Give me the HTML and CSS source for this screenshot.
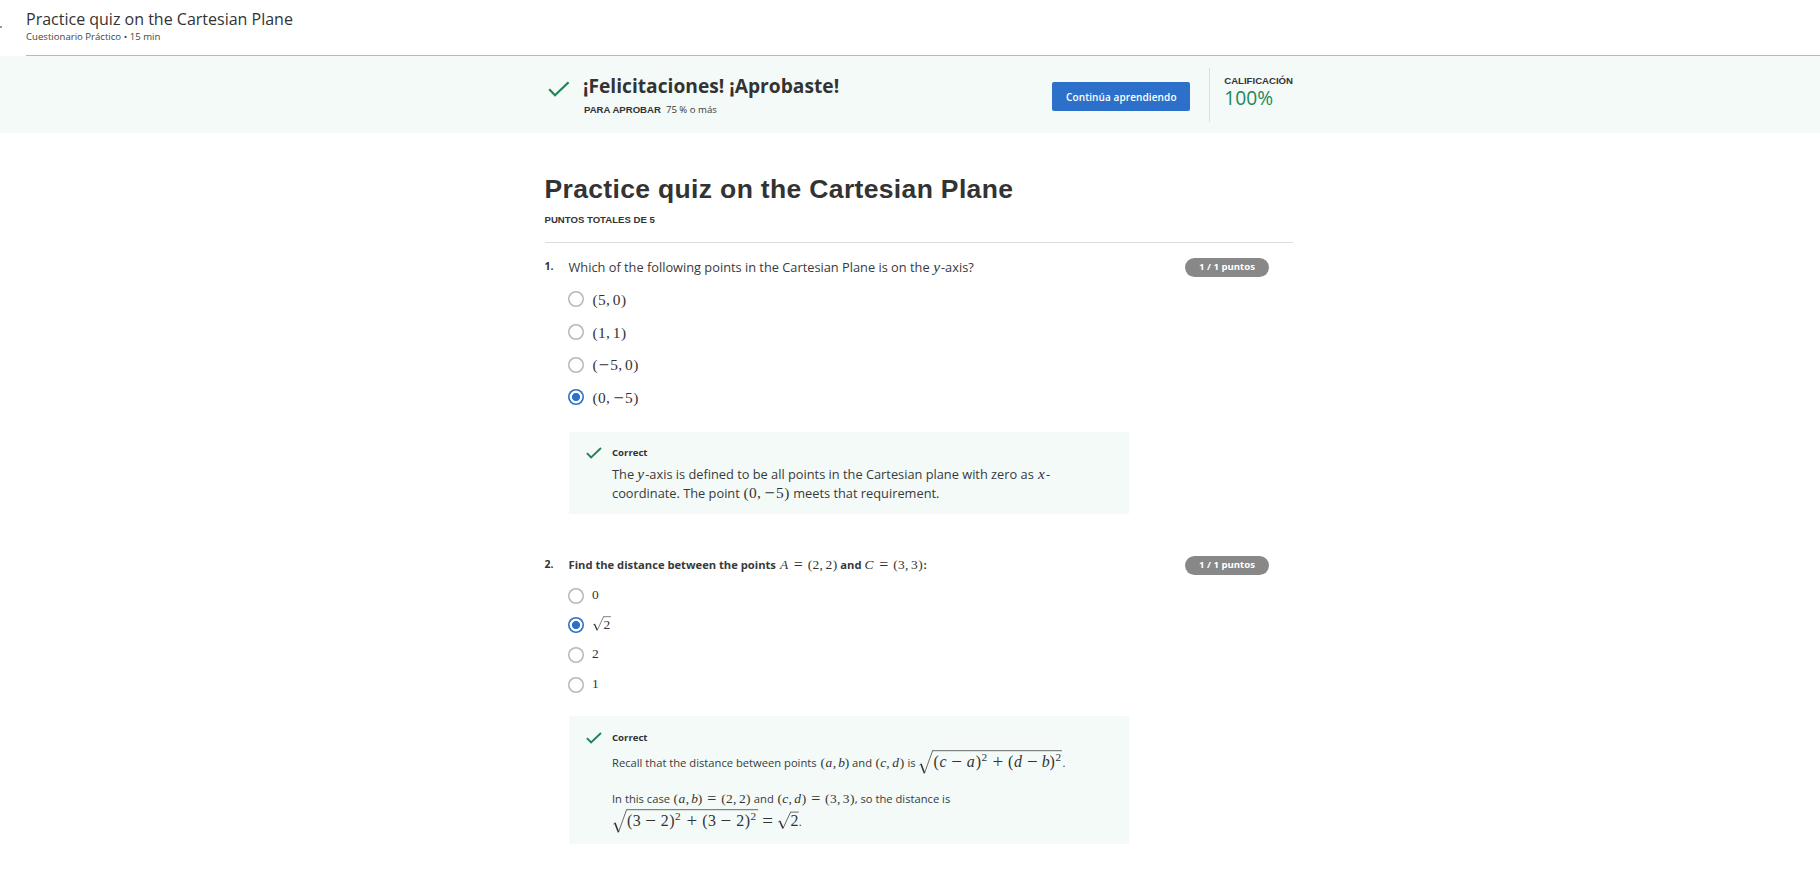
FILE: index.html
```html
<!DOCTYPE html>
<html lang="es">
<head>
<meta charset="utf-8">
<title>Practice quiz on the Cartesian Plane</title>
<link rel="stylesheet" href="styles.css">
</head>
<body>
<header class="top">
  <span class="back"></span>
  <div class="top-text">
    <div class="top-title"><span>Practice quiz on the Cartesian Plane</span></div>
    <div class="top-sub"><span>Cuestionario Práctico • 15 min</span></div>
  </div>
</header>
<section class="band">
  <div class="wrap band-row">
    <svg class="check-lg" viewBox="0 0 22 16"><path d="M1.2 8.2 7 14.2 20.6 1.2"/></svg>
    <div class="congrats">
      <div class="congrats-title"><span>¡Felicitaciones! ¡Aprobaste!</span></div>
      <div class="congrats-sub"><b>PARA APROBAR</b><span>75 % o más</span></div>
    </div>
    <button class="btn"><span>Continúa aprendiendo</span></button>
    <div class="grade">
      <div class="grade-label"><span>CALIFICACIÓN</span></div>
      <div class="grade-value"><span>100%</span></div>
    </div>
  </div>
</section>
<main class="wrap">
  <h1><span>Practice quiz on the Cartesian Plane</span></h1>
  <div class="total"><span>PUNTOS TOTALES DE 5</span></div>

  <section class="question q1">
    <div class="num">1.</div>
    <div class="body">
      <p class="ask"><span>Which of the following points in the Cartesian Plane is on the </span><svg class="tex" style="width:.52em" viewBox="0 -700 520 700"><text class="it" x="20">y</text></svg><span>-axis?</span></p>
      <ul class="options">
        <li><i class="radio"></i><svg class="tex" style="width:2.223em" viewBox="0 -700 2223 700"><text x="28 389 903 1334 1862">(5,0)</text></svg></li>
        <li><i class="radio"></i><svg class="tex" style="width:2.223em" viewBox="0 -700 2223 700"><text x="28 389 903 1334 1862">(1,1)</text></svg></li>
        <li><i class="radio"></i><svg class="tex" style="width:3.001em" viewBox="0 -700 3001 700"><text><tspan x="28">(</tspan><tspan class="op" x="435">−</tspan><tspan x="1167 1681 2112 2640">5,0)</tspan></text></svg></li>
        <li><i class="radio on"></i><svg class="tex" style="width:3.001em" viewBox="0 -700 3001 700"><text><tspan x="28 389 903">(0,</tspan><tspan class="op" x="1380">−</tspan><tspan x="2112 2640">5)</tspan></text></svg></li>
      </ul>
      <div class="feedback">
        <svg class="check-sm" viewBox="0 0 22 16"><path d="M1.2 8.2 7 14.2 20.6 1.2"/></svg>
        <div class="fb-text">
          <div class="correct"><span>Correct</span></div>
          <p><span>The </span><svg class="tex" style="width:.5em" viewBox="0 -700 500 700"><text class="it" x="20">y</text></svg><span>-axis is defined to be all points in the Cartesian plane with zero as </span><svg class="tex" style="width:.572em" viewBox="0 -700 572 700"><text class="it" x="70">x</text></svg><span>-</span></p>
          <p><span>coordinate. The point </span><svg class="tex" style="width:3.001em" viewBox="0 -700 3001 700"><text><tspan x="28 389 903">(0,</tspan><tspan class="op" x="1380">−</tspan><tspan x="2112 2640">5)</tspan></text></svg><span> meets that requirement.</span></p>
        </div>
      </div>
    </div>
    <div class="pill"><span>1 / 1 puntos</span></div>
  </section>

  <section class="question q2">
    <div class="num">2.</div>
    <div class="body">
      <p class="ask"><b>Find the distance between the points </b><svg class="tex" style="width:4.307em" viewBox="0 -700 4307 700"><text><tspan class="it" x="70">A</tspan><tspan class="op" x="1084">=</tspan><tspan x="2112 2473 2987 3418 3946">(2,2)</tspan></text></svg><b> and </b><svg class="tex" style="width:4.344em" viewBox="0 -700 4344 700"><text><tspan class="it" x="40">C</tspan><tspan class="op" x="1121">=</tspan><tspan x="2149 2510 3024 3455 3983">(3,3)</tspan></text></svg><b>:</b></p>
      <ul class="options">
        <li><i class="radio"></i><svg class="tex" style="width:.5em" viewBox="0 -700 500 700"><text>0</text></svg></li>
        <li><i class="radio on"></i><svg class="tex" style="width:1.333em" viewBox="0 -700 1333 700"><path class="rule" d="M833 -870H1390"/><path class="surd" d="M90 -270 180 -330"/><path class="surd heavy" d="M180 -330 385 130"/><path class="surd" d="M385 130 850 -870"/><text x="850">2</text></svg></li>
        <li><i class="radio"></i><svg class="tex" style="width:.5em" viewBox="0 -700 500 700"><text>2</text></svg></li>
        <li><i class="radio"></i><svg class="tex" style="width:.5em" viewBox="0 -700 500 700"><text>1</text></svg></li>
      </ul>
      <div class="feedback">
        <svg class="check-sm" viewBox="0 0 22 16"><path d="M1.2 8.2 7 14.2 20.6 1.2"/></svg>
        <div class="fb-text">
          <div class="correct"><span>Correct</span></div>
          <p class="l1"><span>Recall that the distance between points </span><svg class="tex" style="width:2.181em" viewBox="0 -700 2181 700"><text><tspan x="28">(</tspan><tspan class="it" x="400">a</tspan><tspan x="932">,</tspan><tspan class="it" x="1345">b</tspan><tspan x="1820">)</tspan></text></svg><span> and </span><svg class="tex" style="width:2.176em" viewBox="0 -700 2176 700"><text><tspan x="28">(</tspan><tspan class="it" x="389">c</tspan><tspan x="836">,</tspan><tspan class="it" x="1270">d</tspan><tspan x="1815">)</tspan></text></svg><span> is </span><svg class="tex big" style="width:8.941em" viewBox="0 -700 8941 700"><path class="rule" d="M890 -1030H8941"/><path class="surd" d="M90 -130 180 -210"/><path class="surd heavy" d="M180 -210 400 370"/><path class="surd" d="M400 370 905 -1030"/><text><tspan x="958">(</tspan><tspan class="it" x="1339">c</tspan><tspan class="op" x="2060">−</tspan><tspan class="it" x="3025">a</tspan><tspan x="3581">)</tspan><tspan class="sup" x="3942" dy="-363">2</tspan><tspan class="op" x="4634" dy="363">+</tspan><tspan x="5596">(</tspan><tspan class="it" x="5957">d</tspan><tspan class="op" x="6765">−</tspan><tspan class="it" x="7690">b</tspan><tspan x="8176">)</tspan><tspan class="sup" x="8537" dy="-363">2</tspan></text></svg><span>.</span></p>
          <p class="l2"><span>In this case </span><svg class="tex" style="width:5.738em" viewBox="0 -700 5738 700"><text><tspan x="28">(</tspan><tspan class="it" x="400">a</tspan><tspan x="932">,</tspan><tspan class="it" x="1345">b</tspan><tspan x="1820">)</tspan><tspan class="op" x="2515">=</tspan><tspan x="3543 3904 4418 4849 5377">(2,2)</tspan></text></svg><span> and </span><svg class="tex" style="width:5.733em" viewBox="0 -700 5733 700"><text><tspan x="28">(</tspan><tspan class="it" x="389">c</tspan><tspan x="836">,</tspan><tspan class="it" x="1270">d</tspan><tspan x="1815">)</tspan><tspan class="op" x="2510">=</tspan><tspan x="3538 3899 4413 4844 5372">(3,3)</tspan></text></svg><span>, so the distance is</span></p>
          <p class="l3"><svg class="tex big" style="width:11.6em" viewBox="0 -700 11600 700"><path class="rule" d="M890 -1030H9080M11080 -880H11600"/><path class="surd" d="M90 -130 180 -210"/><path class="surd heavy" d="M180 -210 400 370"/><path class="surd" d="M400 370 905 -1030"/><text><tspan x="928 1289">(3</tspan><tspan class="op" x="2060">−</tspan><tspan x="3031 3559">2)</tspan><tspan class="sup" x="3920" dy="-363">2</tspan><tspan class="op" x="4622" dy="363">+</tspan><tspan x="5604 5965">(3</tspan><tspan class="op" x="6743">−</tspan><tspan x="7717 8245">2)</tspan><tspan class="sup" x="8606" dy="-363">2</tspan><tspan class="op" x="9334" dy="363">=</tspan><tspan x="11090">2</tspan></text><path class="surd" d="M10330 -270 10420 -330"/><path class="surd heavy" d="M10420 -330 10625 130"/><path class="surd" d="M10625 130 11095 -880"/></svg><span>.</span></p>
        </div>
      </div>
    </div>
    <div class="pill"><span>1 / 1 puntos</span></div>
  </section>
</main>
</body>
</html>
```
FILE: styles.css
```css
* { box-sizing: border-box; }
body {
  margin: 0;
  height: 871px;
  overflow: hidden;
  background: #fff;
  color: #373a3c;
  font-family: "Open Sans", "Noto Sans", sans-serif;
}
p, ul, h1 { margin: 0; padding: 0; }
ul { list-style: none; }
span, b { white-space: pre; }

.top { display: flex; height: 56px; }
.back { width: 2px; height: 2px; margin: 26px 24px 0 0; background: #999; }
.top-text { flex: 1; padding-top: 9px; border-bottom: 1px solid #b5b9b8; }
.top-title { font-size: 16px; line-height: 20px; color: #333; }
.top-sub { font-size: 9.6px; line-height: 16px; color: #444; }

.wrap { width: 748.5px; margin-left: 544.5px; }
.band { height: 77px; background: #f3faf8; }
.band-row { display: flex; }
.check-lg { width: 22px; height: 16px; margin: 25px 13px 0 3.5px; }
.check-lg path, .check-sm path { fill: none; stroke: #1f8354; stroke-width: 2.2; }
.congrats { width: 470px; padding-top: 16px; }
.congrats-title { font-weight: 700; font-size: 19.2px; line-height: 28px; color: #333; }
.congrats-sub { display: flex; gap: 5px; padding: 2px 0 0 1px; line-height: 16px; font-size: 9.6px; }
.congrats-sub b { font: 700 9.6px/16px "Liberation Sans", Arial, sans-serif; color: #333; }
.btn {
  width: 138px; height: 29px; margin: 26px 19px 0 0; padding: 0;
  border: 0; border-radius: 2px; background: #2d70c9; color: #fff;
  font: 600 10px/28px "Open Sans", sans-serif; letter-spacing: .1px;
}
.grade { height: 54px; margin-top: 12px; padding: 8px 0 0 14px; border-left: 1px solid #ddd; }
.grade-label { font: 700 9.6px/10px "Liberation Sans", Arial, sans-serif; color: #333; }
.grade-value { font-size: 19.2px; line-height: 23px; color: #24865a; }

h1 { padding-top: 39px; font: 700 26.5px/34px "Liberation Sans", Arial, sans-serif; letter-spacing: .34px; color: #333; }
h1 + .total { height: 37px; }
.total { padding-top: 6px; font: 700 9.6px/16px "Liberation Sans", Arial, sans-serif; color: #333; border-bottom: 1px solid #ddd; }

.question { display: flex; }
.num { width: 24px; font-weight: 700; font-size: 10.5px; line-height: 16px; color: #333; }
.body { width: 616.5px; }
.pill {
  width: 84px; height: 19px; border-radius: 10px; background: #888; color: #fff;
  font-weight: 700; font-size: 9.6px; line-height: 17px; text-align: center;
}
.q1 { padding-top: 15px; height: 312px; font-size: 12.8px; }
.q1 .ask { line-height: 18px; height: 20px; }
.q2 { font-size: 11.2px; }
.q2 .pill { margin-top: 1px; }
.q2 .ask { line-height: 19px; height: 20px; }
.q2 .num { line-height: 18px; }

.tex {
  height: .7em; font-size: 15.6px; overflow: visible; vertical-align: baseline;
  fill: #333;
}
.tex text { font-family: "Liberation Serif", "Times New Roman", serif; font-size: 990px; }
.tex .it { font-style: italic; }
.tex .sup { font-size: 700px; }
.tex .op { font-size: 1180px; baseline-shift: -75px; }
.rule { fill: none; stroke: #555; stroke-width: 55; }
.surd { fill: none; stroke: #333; stroke-width: 45; }
.surd.heavy { stroke-width: 95; }
.q2 .tex { font-size: 13.6px; }
.q2 .tex.big { font-size: 16.1px; }

.options li { display: flex; align-items: center; gap: 7.5px; }
.radio {
  width: 16px; height: 16px; flex: none; border-radius: 50%; background: #fff; margin-left: -.5px;
  box-shadow: inset 0 0 0 1.5px #b8b8b8;
}
.radio.on { box-shadow: inset 0 0 0 1.6px #2d70c9; background: radial-gradient(circle, #2d70c9 3.7px, #fff 4.4px); }
.q1 .options { padding-top: 5px; height: 154px; }
.q1 .options li { height: 32.67px; }
.q2 .options { padding-top: 6px; height: 141px; }
.q2 .options li { height: 29.67px; }
.q2 .options .tex { margin-bottom: 4px; }

.feedback { display: flex; width: 560px; padding: 16px 17px 0; background: #f3faf8; }
.check-sm { width: 16px; height: 12px; margin-right: 10.5px; }
.check-sm path { stroke-width: 2.6; }
.correct { font-weight: 700; font-size: 9.6px; line-height: 12px; color: #333; }
.q1 .feedback { height: 82px; padding-top: 15px; }
.q1 .fb-text p { line-height: 19px; }
.q1 .correct { margin-bottom: 6px; }
.q2 .feedback { height: 128px; }
.fb-text .l1 { line-height: 20px; margin-top: 9px; }
.fb-text .l2 { line-height: 20px; margin-top: 16px; }
.fb-text .l3 { line-height: 20px; margin-top: 3px; }
```
